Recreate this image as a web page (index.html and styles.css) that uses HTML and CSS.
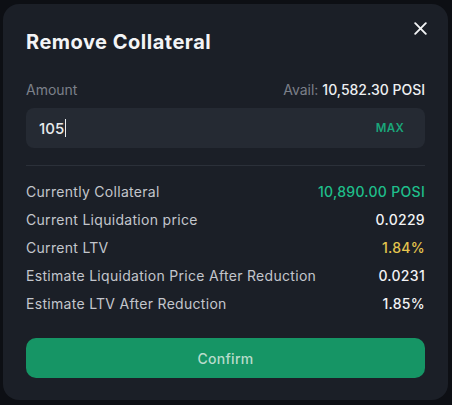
FILE: index.html
```html
<!DOCTYPE html>
<html>
<head>
<meta charset="utf-8">
<link rel="stylesheet" href="styles.css">
</head>
<body>
<div class="backdrop">
  <div class="modal">
    <div class="header">
      <h1 class="title">Remove Collateral</h1>
      <button class="close" aria-label="Close">
        <svg width="13" height="13" viewBox="0 0 13 13"><path d="M1.2 1.2 L11.8 11.8 M11.8 1.2 L1.2 11.8" stroke="#f2f3f5" stroke-width="1.9" stroke-linecap="round"/></svg>
      </button>
    </div>
    <div class="amount-row">
      <span class="muted">Amount</span>
      <span class="muted">Avail: <span class="strong">10,582.30 POSI</span></span>
    </div>
    <div class="input">
      <span class="value">105<span class="caret"></span></span>
      <span class="max">MAX</span>
    </div>
    <div class="divider"></div>
    <div class="rows">
      <div class="row"><span>Currently Collateral</span><span class="green">10,890.00 POSI</span></div>
      <div class="row"><span>Current Liquidation price</span><span class="white">0.0229</span></div>
      <div class="row"><span>Current LTV</span><span class="yellow">1.84%</span></div>
      <div class="row"><span>Estimate Liquidation Price After Reduction</span><span class="white">0.0231</span></div>
      <div class="row"><span>Estimate LTV After Reduction</span><span class="white">1.85%</span></div>
    </div>
    <button class="confirm">Confirm</button>
  </div>
</div>
</body>
</html>
```
FILE: styles.css
```css
* { box-sizing: border-box; }
html, body { margin: 0; padding: 0; }
body {
  width: 452px; height: 405px;
  background: #0d0f14;
  font-family: "Inter", "Liberation Sans", sans-serif;
  overflow: hidden;
}
.backdrop {
  padding: 4px 4px 5px 3px;
  height: 405px;
}
.modal {
  background: #1b1f27;
  border-radius: 16px;
  height: 396px;
  padding: 0 23px 0 23px;
  display: flex;
  flex-direction: column;
}
.header {
  display: flex;
  justify-content: space-between;
  align-items: flex-start;
  height: 67px;
}
.title {
  margin: 26px 0 0 0;
  font-size: 20px;
  font-weight: 700;
  color: #f3f4f6;
  letter-spacing: 0.5px;
}
.close {
  background: none; border: 0; padding: 0;
  margin: 18px -2px 0 0;
  width: 13px; height: 13px;
  display: flex;
}
.amount-row {
  display: flex;
  justify-content: space-between;
  font-size: 14px;
  height: 36px;
  padding-top: 10px;
  line-height: 18px;
}
.muted { color: #7b808a; }
.strong { color: #eef0f2; font-weight: 500; }
.input {
  height: 40px;
  background: #252a33;
  border-radius: 8px;
  display: flex;
  align-items: center;
  justify-content: space-between;
  padding: 0 21px 0 13px;
  margin-top: 1px;
}
.value {
  color: #e8eaed;
  font-size: 15px;
  font-weight: 500;
  display: flex;
  align-items: center;
}
.caret {
  display: inline-block;
  width: 1px; height: 18px;
  background: #e8eaed;
  margin-left: 1px;
}
.max {
  color: #1aa67a;
  font-size: 11.5px;
  font-weight: 600;
  letter-spacing: 0.3px;
}
.divider {
  height: 1px;
  background: #2b3039;
  margin-top: 17px;
}
.rows {
  display: flex;
  flex-direction: column;
  margin-top: 16px;
}
.row {
  display: flex;
  justify-content: space-between;
  height: 28px;
  line-height: 20px;
  font-size: 14px;
  letter-spacing: 0.3px;
  color: #c3c6cc;
}
.green { color: #1fbf8b; font-weight: 500; }
.white { color: #f2f3f5; font-weight: 500; }
.yellow { color: #e5c54e; font-weight: 500; }
.confirm {
  margin-top: 16px;
  height: 40px;
  border: 0;
  border-radius: 10px;
  background: #169565;
  color: #b9dccb;
  font-family: inherit;
  font-size: 14px;
  font-weight: 500;
  letter-spacing: 0.3px;
}
```
